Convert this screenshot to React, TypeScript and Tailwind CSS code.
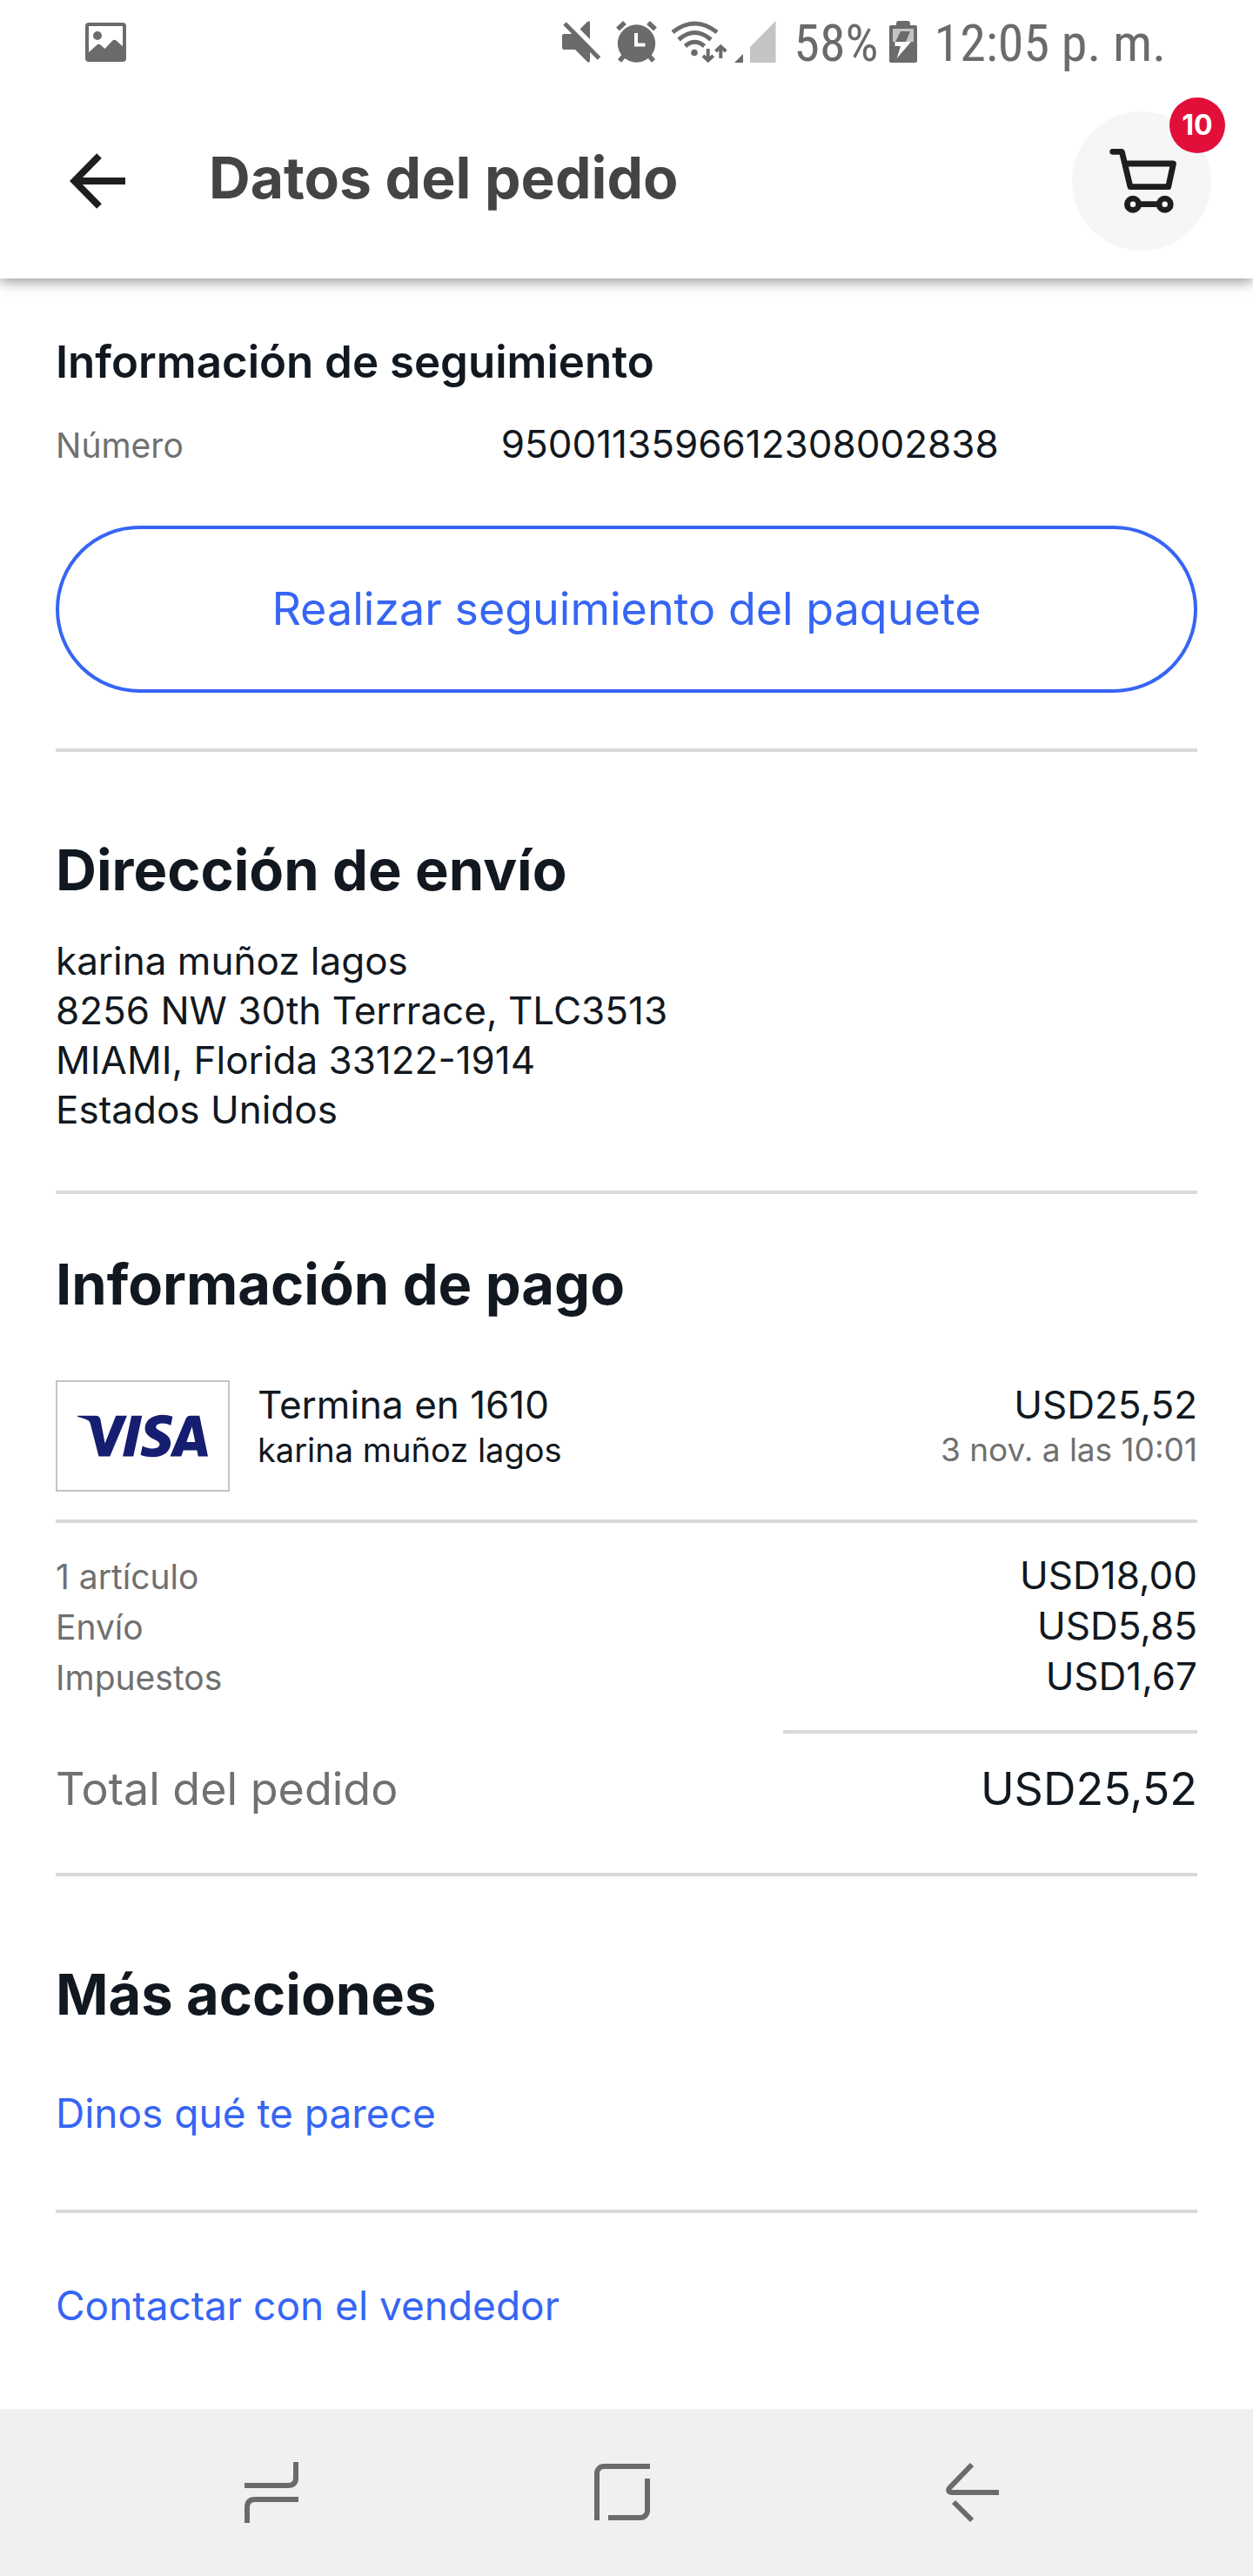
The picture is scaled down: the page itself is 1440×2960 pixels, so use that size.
import type { ReactNode } from "react";
import { SiVisa } from "react-icons/si";

function PictureIcon() {
  return (
    <svg width="47" height="45" viewBox="0 0 47 45" aria-hidden="true">
      <rect x="2" y="2" width="43" height="41" rx="2" fill="none" stroke="#6b6b6b" strokeWidth="4" />
      <circle cx="14" cy="15" r="5" fill="#6b6b6b" />
      <path d="M3 35 13 26q2.500-2.500 5 0l4.500 4 8.500-9q2.500-2.500 5 0l8 7V43H3Z" fill="#6b6b6b" />
    </svg>
  );
}

function MuteIcon() {
  return (
    <svg width="44" height="48" viewBox="0 0 44 48" fill="#6b6b6b" aria-hidden="true">
      <path d="M2 15H14L32 33V46q-1 3-3 1L15 33H2q-2 0-2-2V17q0-2 2-2Z" />
      <path d="M20.500 9.500 29 1q3-2 3 1V21Z" />
      <path d="M3 3 42.500 43" stroke="#6b6b6b" strokeWidth="5" />
    </svg>
  );
}

function AlarmIcon() {
  return (
    <svg width="47" height="48" viewBox="0 0 47 48" fill="none" stroke="#6b6b6b" aria-hidden="true">
      <circle cx="23.500" cy="26" r="21.700" fill="#6b6b6b" stroke="none" />
      <path d="M2 9.500 10 2M37 2 45 9.500M10 39 4 46M37 39 43 46" strokeWidth="5.500" />
      <path d="M23 14V27.500H33.500" stroke="#fff" strokeWidth="4" />
    </svg>
  );
}

function WifiIcon() {
  return (
    <svg width="65" height="48" viewBox="0 0 65 48" fill="none" stroke="#6b6b6b" strokeWidth="5" aria-hidden="true">
      <path d="M2 13Q27.300-7 53 13M9 21.500Q27.300 5.500 46 21.500M16.500 29Q27.300 19.500 38.500 29" />
      <circle cx="27" cy="36.500" r="3.800" fill="#6b6b6b" stroke="none" />
      <path d="M42.700 32V45M37 40 42.700 45.500 48.700 40M57.300 43V30M51.500 35 57.300 29.500 63.300 35" strokeWidth="4" />
    </svg>
  );
}

function SignalIcon() {
  return (
    <svg width="48" height="48" viewBox="0 0 48 48" aria-hidden="true">
      <path d="M0 48 10 38V48Z" fill="#6b6b6b" />
      <path d="M18 30 47.500 0V48H18Z" fill="#c4c4c4" />
    </svg>
  );
}

function BatteryIcon() {
  return (
    <svg width="32" height="48" viewBox="0 0 32 48" aria-hidden="true">
      <path d="M8 5V3q0-3 3-3H21q3 0 3 3V5H30q2 0 2 2V46q0 2-2 2H2q-2 0-2-2V7Q0 5 2 5Z" fill="#6b6b6b" />
      <path d="M4 9H28V24H4Z" fill="#c4c4c4" />
      <path d="M13 12H24L19 24H7Z" fill="#6b6b6b" />
      <path d="M6.500 24H25L8.700 43 13 29H6.500Z" fill="#fff" />
    </svg>
  );
}

function BackArrowIcon() {
  return (
    <svg width="64" height="64" viewBox="0 0 64 64" fill="none" stroke="#1e1e1e" strokeWidth="8" aria-hidden="true">
      <path d="M34 3 5.500 32 34 61M64 32H6" />
    </svg>
  );
}

function CartIcon() {
  return (
    <svg
      width="80"
      height="76"
      viewBox="40 42 80 76"
      fill="none"
      stroke="#1e1e1e"
      strokeWidth="6.800"
      strokeLinecap="round"
      strokeLinejoin="round"
      aria-hidden="true"
    >
      <path d="M46.700 46.300H57.300L67 86.700H110.700L116.500 60H61" />
      <circle cx="70" cy="106.700" r="6.600" fill="#fff" />
      <circle cx="106.700" cy="106.700" r="6.600" fill="#fff" />
      <path d="M78 106.700H99" />
    </svg>
  );
}

function Divider() {
  return <hr className="h-1 border-0 bg-[#d9d9d9]" />;
}

function SectionTitle({ children }: { children: ReactNode }) {
  return <h2 className="text-[65px] leading-[80px] font-bold">{children}</h2>;
}

const charges = [
  { label: "1 artículo", amount: "USD18,00" },
  { label: "Envío", amount: "USD5,85" },
  { label: "Impuestos", amount: "USD1,67" },
];

export default function App() {
  return (
    <div className="flex min-h-screen flex-col bg-white font-['Inter','Liberation_Sans',sans-serif] text-[#111820]">
      <div className="shadow-[0_4px_14px_rgba(0,0,0,0.4)]">
        <div className="flex h-24 items-center justify-between pr-[100px] pl-[98px]">
          <PictureIcon />
          <div className="flex items-center font-['Roboto_Condensed',Roboto,sans-serif] text-[60px] leading-[64px] text-[#6b6b6b]">
            <MuteIcon />
            <div className="ml-[18px]">
              <AlarmIcon />
            </div>
            <div className="ml-4">
              <WifiIcon />
            </div>
            <div className="ml-2">
              <SignalIcon />
            </div>
            <span className="ml-5 pt-1">58%</span>
            <div className="ml-3">
              <BatteryIcon />
            </div>
            <span className="ml-5 pt-1">12:05 p. m.</span>
          </div>
        </div>

        <header className="flex h-56 items-center pr-12 pl-20">
          <button type="button" aria-label="Volver">
            <BackArrowIcon />
          </button>
          <h1 className="ml-24 flex-1 pb-2 text-[66px] leading-[80px] font-bold text-[#444444]">
            Datos del pedido
          </h1>
          <button
            type="button"
            aria-label="Carrito, 10 artículos"
            className="relative flex size-40 items-center justify-center rounded-full bg-[#f6f6f6]"
          >
            <CartIcon />
            <span className="absolute -top-4 -right-4 flex size-16 items-center justify-center rounded-full bg-[#e10f3a] text-[32px] leading-[40px] font-bold text-white">
              10
            </span>
          </button>
        </header>
      </div>

      <main className="flex flex-col px-16 pb-[88px]">
        <section className="pt-16">
          <h2 className="text-[51px] leading-[64px] font-semibold">Información de seguimiento</h2>
          <dl className="mt-[34px] flex items-baseline leading-[56px]">
            <dt className="w-[39%] text-[39px] text-[#707070]">Número</dt>
            <dd className="text-[44px]">9500113596612308002838</dd>
          </dl>
          <button
            type="button"
            className="mt-16 mb-16 h-48 w-full rounded-full border-4 border-[#3665f3] text-[52px] leading-[64px] text-[#3665f3]"
          >
            Realizar seguimiento del paquete
          </button>
        </section>
        <Divider />

        <section className="pt-24 pb-16">
          <SectionTitle>Dirección de envío</SectionTitle>
          <address className="mt-9 text-[44px] leading-[57px] not-italic">
            <p>karina muñoz lagos</p>
            <p>8256 NW 30th Terrrace, TLC3513</p>
            <p>MIAMI, Florida 33122-1914</p>
            <p>Estados Unidos</p>
          </address>
        </section>
        <Divider />

        <section className="pt-16">
          <SectionTitle>Información de pago</SectionTitle>
          <div className="mt-[70px] mb-8 flex">
            <div className="flex h-32 w-[200px] items-center justify-center border-2 border-[#c4c4c4] text-[#151e70]">
              <SiVisa size={150} className="shrink-0" title="Visa" />
            </div>
            <div className="ml-8 flex-1">
              <p className="text-[44px] leading-[56px]">Termina en 1610</p>
              <p className="text-[38px] leading-[48px]">karina muñoz lagos</p>
            </div>
            <div className="text-right">
              <p className="text-[44px] leading-[56px]">USD25,52</p>
              <p className="text-[37px] leading-[48px] text-[#707070]">3 nov. a las 10:01</p>
            </div>
          </div>
          <Divider />
          <dl className="mt-8 mb-8">
            {charges.map((charge) => (
              <div key={charge.label} className="flex items-baseline justify-between leading-[56px]">
                <dt className="text-[39px] text-[#707070]">{charge.label}</dt>
                <dd className="text-[44px]">{charge.amount}</dd>
              </div>
            ))}
          </dl>
          <hr className="ml-auto h-1 w-[476px] border-0 bg-[#d9d9d9]" />
          <dl className="mt-8 mb-16 flex justify-between text-[52px] leading-[64px]">
            <dt className="text-[#707070]">Total del pedido</dt>
            <dd>USD25,52</dd>
          </dl>
        </section>
        <Divider />

        <section className="flex flex-col pt-24">
          <SectionTitle>Más acciones</SectionTitle>
          <a href="#opinion" className="mt-[68px] mb-[82px] text-[46px] leading-[57px] text-[#3665f3]">
            Dinos qué te parece
          </a>
          <Divider />
          <a href="#contacto" className="mt-[78px] text-[46px] leading-[57px] text-[#3665f3]">
            Contactar con el vendedor
          </a>
        </section>
      </main>

      <nav className="mt-auto flex h-48 items-center bg-[#f0f0f0] pr-[120px] pl-[110px]">
        <button type="button" aria-label="Recientes" className="flex flex-1 justify-center">
          <svg width="62" height="70" viewBox="0 0 62 70" fill="none" stroke="#6b6b6b" strokeWidth="6">
            <path d="M0 27H50q9 0 9-9V0M3 70V52q0-9 9-9H62" />
          </svg>
        </button>
        <button type="button" aria-label="Inicio" className="flex flex-1 justify-center">
          <svg width="64" height="66" viewBox="0 0 64 66" fill="none" stroke="#6b6b6b" strokeWidth="6">
            <path d="M3 65V11a8 8 0 0 1 8-8H64M61 17V54a8 8 0 0 1-8 8H16" />
          </svg>
        </button>
        <button type="button" aria-label="Atrás" className="flex flex-1 justify-center">
          <svg width="62" height="70" viewBox="0 0 62 70" fill="none" stroke="#6b6b6b" strokeWidth="6">
            <path d="M30 3 4.500 29.500C1.500 33 4 35 7 35H61M9 46 30 67" />
          </svg>
        </button>
      </nav>
    </div>
  );
}
